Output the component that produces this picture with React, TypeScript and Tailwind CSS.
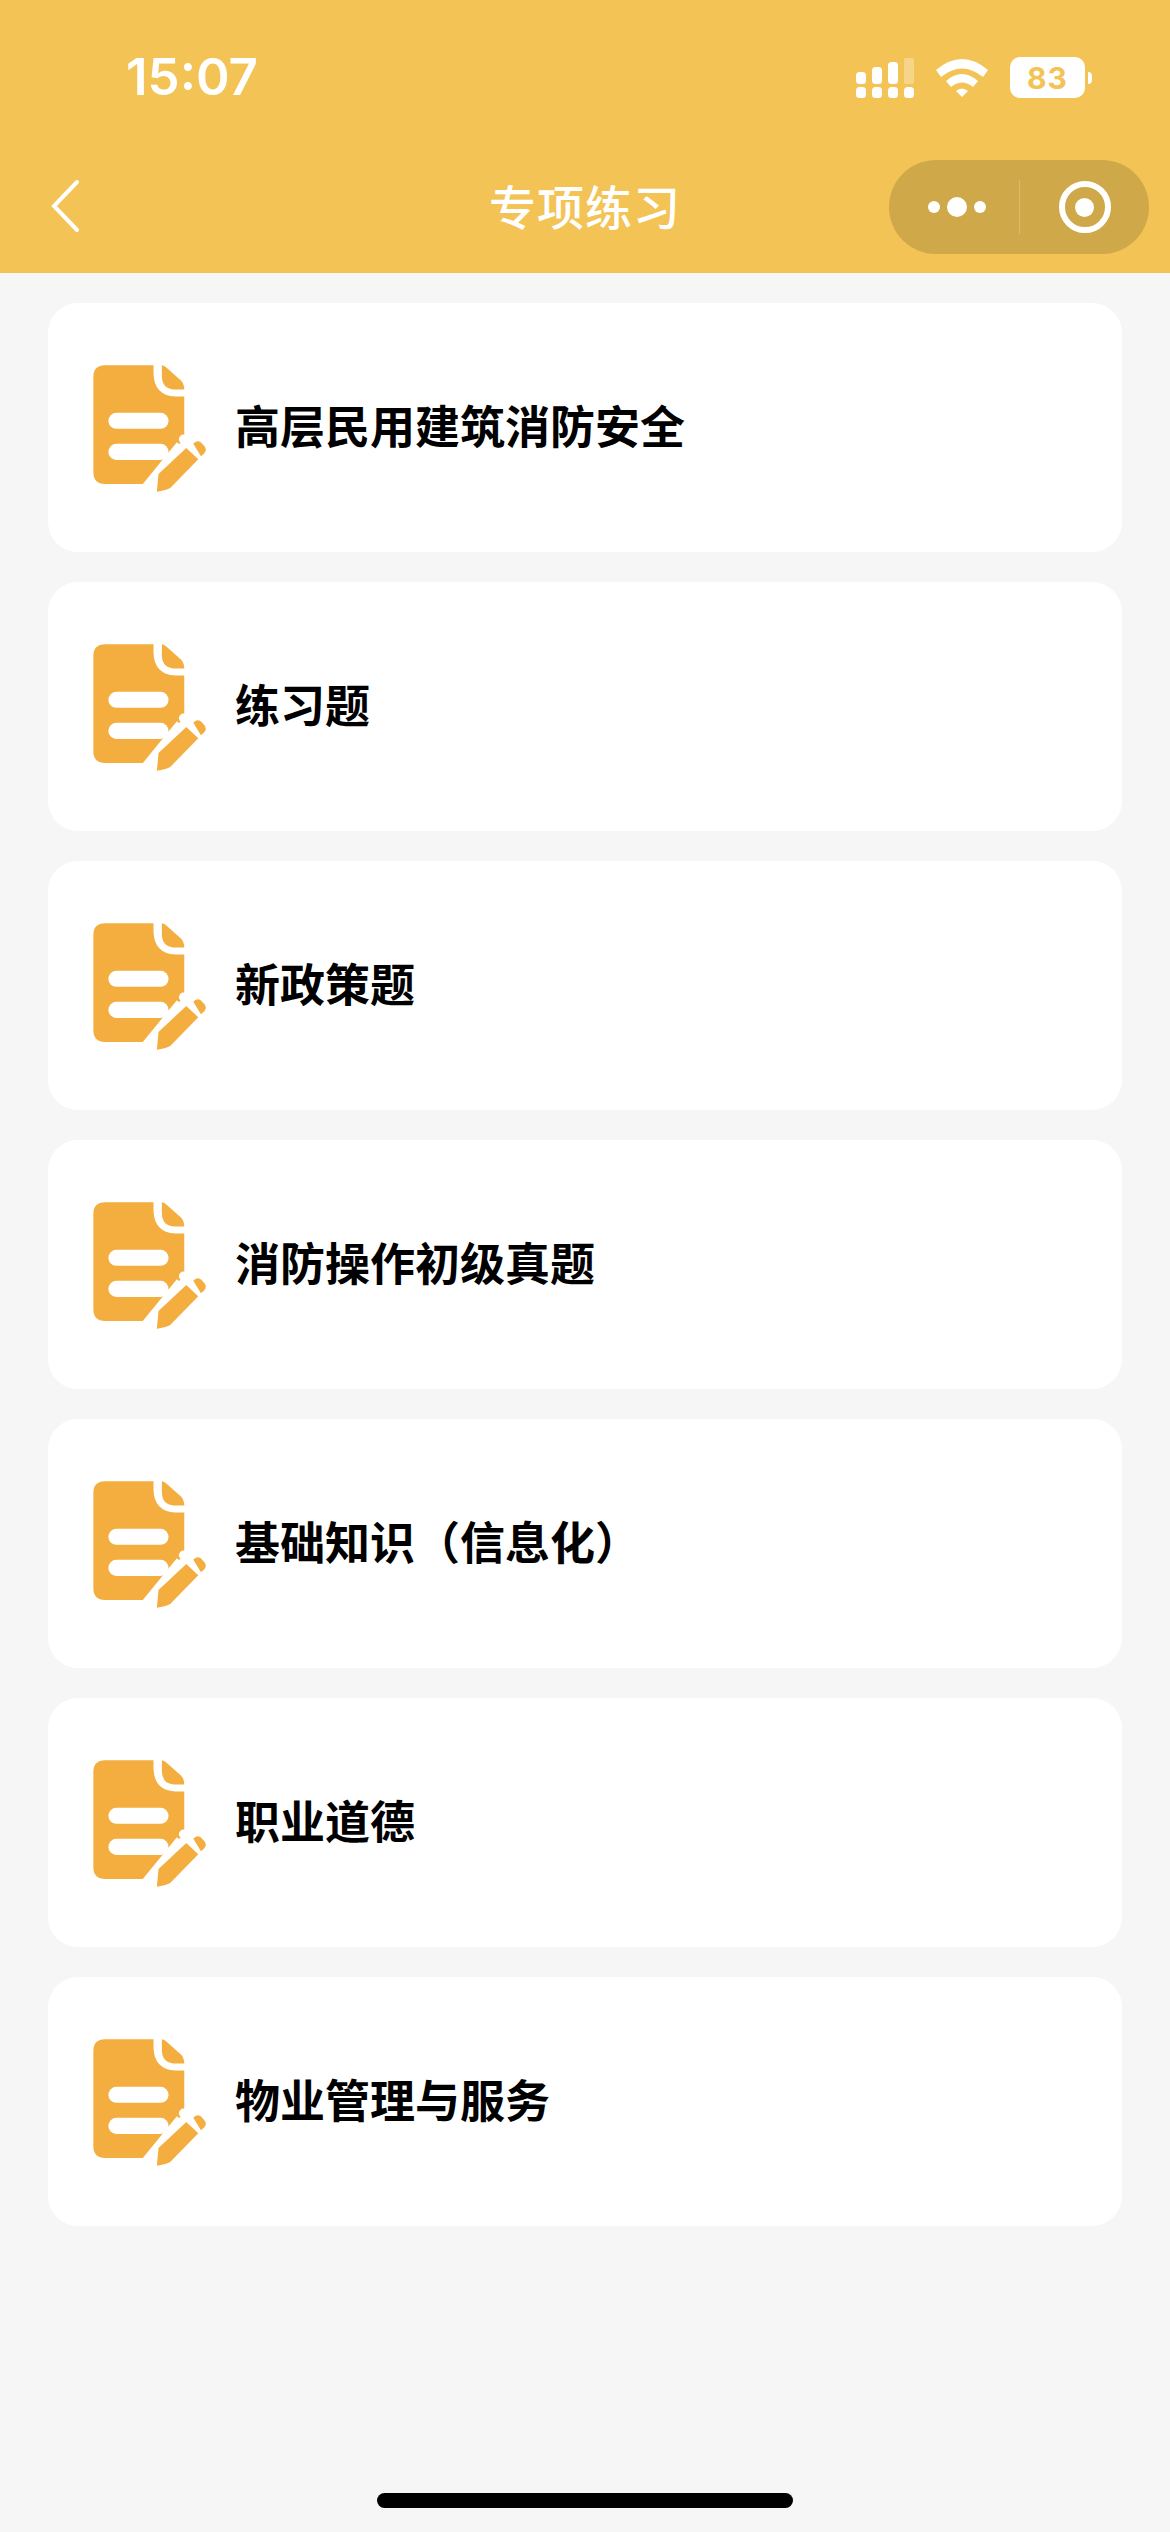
import { ReactNode } from "react";

const items = [
  "高层民用建筑消防安全",
  "练习题",
  "新政策题",
  "消防操作初级真题",
  "基础知识（信息化）",
  "职业道德",
  "物业管理与服务",
];

function PracticeIcon() {
  return (
    <svg viewBox="180 215 350 395" className="h-[132px] w-[117px] shrink-0" aria-hidden>
      <path
        fill="#f4ae3f"
        d="M225 225H370V250Q372 315 435 318H462V452L442 462L340 580H225Q190 580 190 545V260Q190 225 225 225Z"
      />
      <path fill="#f4ae3f" d="M395 225Q402 226 410 233L452 270Q462 280 462 297H430Q397 295 395 260Z" />
      <rect x="235" y="367" width="180" height="48" rx="24" fill="#fff" />
      <rect x="235" y="460" width="180" height="48" rx="24" fill="#fff" />
      <path fill="#fff" d="M330 590L440 455L480 490L395 600Z" />
      <path fill="#f4ae3f" d="M380 603L385 550L468 472L504 506L420 592Q405 600 380 603Z" />
      <path fill="#f4ae3f" d="M489 460Q499 447 512 456L522 466Q531 478 522 488L512 497Z" />
      <circle cx="460" cy="446" r="14" fill="#fff" />
    </svg>
  );
}

function PracticeCard({ children }: { children: ReactNode }) {
  return (
    <div className="flex h-[249px] items-center rounded-[30px] bg-white pl-[42px]">
      <PracticeIcon />
      <span className="mb-[6px] ml-[28px] text-[45px] leading-none font-semibold text-black">{children}</span>
    </div>
  );
}

export default function App() {
  return (
    <div
      className="flex h-[2532px] w-[1170px] flex-col overflow-hidden bg-[#f6f6f6]"
      style={{ fontFamily: '"Noto Sans CJK SC", "Liberation Sans", sans-serif' }}
    >
      <header className="h-[273px] shrink-0 bg-[#f3c356] text-white">
        <div className="flex h-[157px] items-start justify-between pr-[78px] pl-[126px]">
          <span className="mt-[47px] font-['Inter'] text-[51px] leading-[60px] font-semibold">15:07</span>
          <div className="mt-[57px] flex items-center gap-[22px]">
            <svg viewBox="0 0 58 40" className="h-[40px] w-[58px]" aria-hidden>
              <rect x="0" y="14" width="10" height="12" rx="3.5" fill="#fff" />
              <rect x="16" y="9" width="10" height="17" rx="3.5" fill="#fff" />
              <rect x="32" y="4" width="10" height="22" rx="3.5" fill="#fff" />
              <rect x="48" y="0" width="10" height="26" rx="2" fill="#fff" fillOpacity="0.3" />
              <rect x="0" y="29" width="10" height="11" rx="3.5" fill="#fff" />
              <rect x="16" y="29" width="10" height="11" rx="3.5" fill="#fff" />
              <rect x="32" y="29" width="10" height="11" rx="3.5" fill="#fff" />
              <rect x="48" y="29" width="10" height="11" rx="3.5" fill="#fff" />
            </svg>
            <svg viewBox="0 0 52 38" className="h-[38px] w-[52px]" aria-hidden>
              <path fill="#fff" d="M0 11Q26-11 52 11L47 18Q26 1 5 18Z" />
              <path fill="#fff" d="M10 22Q26 8 42 22L37 28Q26 19 15 28Z" />
              <path fill="#fff" d="M20 32Q26 27 32 32L26 38Z" />
            </svg>
            <div className="flex items-center">
              <div className="flex h-[41px] w-[75px] items-center justify-center rounded-[10px] bg-white font-['Inter'] text-[30px] leading-none font-bold tracking-[1px] text-[#f3c356]">
                83
              </div>
              <div className="ml-[3px] h-[12px] w-[4px] rounded-r-full bg-white" />
            </div>
          </div>
        </div>
        <div className="relative flex h-[116px] items-start">
          <svg viewBox="0 0 30 54" className="mt-[22px] ml-[51px] h-[54px] w-[30px]" aria-hidden>
            <path d="M26 3L3 27L26 51" fill="none" stroke="#fff" strokeWidth="4" strokeLinecap="round" />
          </svg>
          <span className="absolute top-[19px] left-0 w-full text-center text-[47px] leading-[58px] font-medium tracking-[1px]">
            专项练习
          </span>
          <div className="absolute top-[3px] left-[889px] flex h-[94px] w-[260px] items-center rounded-full bg-[#cfa849]">
            <div className="flex w-[130px] items-center justify-center gap-[7px] pl-[6px]">
              <span className="size-[12px] rounded-full bg-white" />
              <span className="size-[20px] rounded-full bg-white" />
              <span className="size-[12px] rounded-full bg-white" />
            </div>
            <div className="h-[54px] w-px bg-[#dcbc6b]" />
            <div className="flex flex-1 items-center justify-center">
              <div className="flex size-[52px] items-center justify-center rounded-full border-[6px] border-white">
                <span className="size-[19px] rounded-full bg-white" />
              </div>
            </div>
          </div>
        </div>
      </header>
      <main className="flex flex-col gap-[30px] px-[48px] pt-[30px]">
        {items.map((item) => (
          <PracticeCard key={item}>{item}</PracticeCard>
        ))}
      </main>
      <div className="mt-auto mb-[24px] h-[15px] w-[416px] self-center rounded-full bg-black" />
    </div>
  );
}
